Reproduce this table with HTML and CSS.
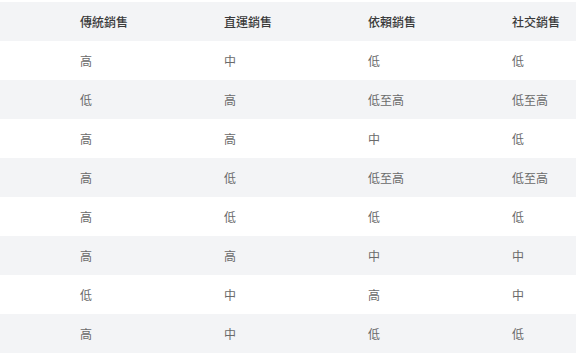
FILE: index.html
```html
<!DOCTYPE html>
<html lang="zh-Hant">
<head>
    <meta charset="UTF-8">
    <meta name="viewport" content="width=device-width, initial-scale=1.0">
    <title>銷售模式比較</title>
    <link rel="stylesheet" href="styles.css">
</head>
<body>
    <table class="compare-table">
        <thead>
            <tr>
                <th>傳統銷售</th>
                <th>直運銷售</th>
                <th>依賴銷售</th>
                <th>社交銷售</th>
            </tr>
        </thead>
        <tbody>
            <tr><td>高</td><td>中</td><td>低</td><td>低</td></tr>
            <tr><td>低</td><td>高</td><td>低至高</td><td>低至高</td></tr>
            <tr><td>高</td><td>高</td><td>中</td><td>低</td></tr>
            <tr><td>高</td><td>低</td><td>低至高</td><td>低至高</td></tr>
            <tr><td>高</td><td>低</td><td>低</td><td>低</td></tr>
            <tr><td>高</td><td>高</td><td>中</td><td>中</td></tr>
            <tr><td>低</td><td>中</td><td>高</td><td>中</td></tr>
            <tr><td>高</td><td>中</td><td>低</td><td>低</td></tr>
        </tbody>
    </table>
</body>
</html>
```

FILE: styles.css
```css
body {
    margin: 0;
    padding-top: 2px;
    background-color: #fff;
    font-family: "Noto Sans CJK TC", "Noto Sans", sans-serif;
}
.compare-table {
    width: 576px;
    border-collapse: collapse;
    table-layout: fixed;
}
.compare-table th,
.compare-table td {
    width: 144px;
    height: 39px;
    padding: 0 0 0 80px;
    box-sizing: border-box;
    text-align: left;
    font-size: 12px;
    line-height: 16px;
    white-space: nowrap;
}
.compare-table th {
    font-weight: 500;
    color: #3a3a3a;
    background-color: #f3f4f6;
}
.compare-table td {
    color: #6a6a6a;
}
.compare-table tbody tr:nth-child(even) {
    background-color: #f3f4f6;
}
```
